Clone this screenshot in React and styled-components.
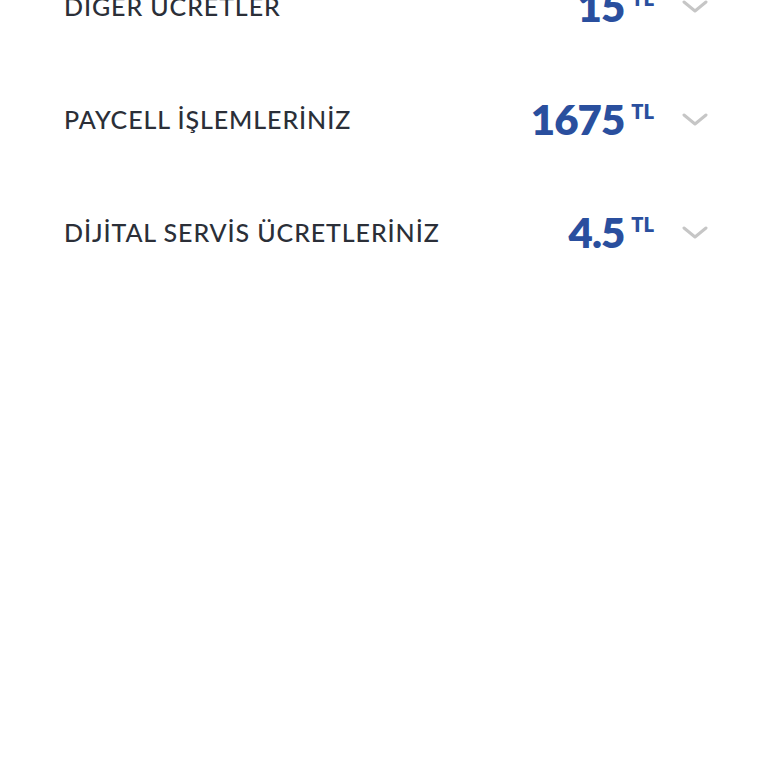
import React from 'react';
import styled, { createGlobalStyle } from 'styled-components';

const GlobalStyle = createGlobalStyle`
  html, body {
    margin: 0;
    padding: 0;
    background: #ffffff;
    overflow: hidden;
  }
  body {
    font-family: 'Lato', 'Noto Sans', sans-serif;
  }
`;

const Page = styled.div`
  width: 768px;
  height: 768px;
  overflow: hidden;
  background: #fff;
`;

// list is scrolled: first row is partly above the top edge
const List = styled.div`
  display: flex;
  flex-direction: column;
  margin-top: -51px;
  padding: 0 60px 0 64px;
`;

const Row = styled.div`
  display: flex;
  align-items: center;
  justify-content: space-between;
  height: 113px;
`;

const Label = styled.span`
  font-size: 25px;
  font-weight: 500;
  color: #2b2f38;
  letter-spacing: 0.9px;
`;

const Right = styled.div`
  display: flex;
  align-items: center;
`;

const Amount = styled.div`
  display: flex;
  align-items: flex-start;
  color: #2a4f9e;
  font-weight: 800;
`;

const Value = styled.span`
  font-size: 42px;
  line-height: 1;
  letter-spacing: -1px;
`;

const Currency = styled.span`
  font-size: 20px;
  line-height: 1;
  margin-left: 7px;
  margin-top: 3px;
`;

const Chevron = styled.svg`
  width: 26px;
  height: 16px;
  margin-left: 28px;
  margin-top: 2px;
`;

const items = [
  { label: 'DİĞER ÜCRETLER', value: '15' },
  { label: 'PAYCELL İŞLEMLERİNİZ', value: '1675' },
  { label: 'DİJİTAL SERVİS ÜCRETLERİNİZ', value: '4.5' },
];

const App = () => (
  <Page>
    <GlobalStyle />
    <List>
      {items.map((item) => (
        <Row key={item.label}>
          <Label>{item.label}</Label>
          <Right>
            <Amount>
              <Value>{item.value}</Value>
              <Currency>TL</Currency>
            </Amount>
            <Chevron viewBox="0 0 26 16">
              <path d="M2 3 L13 12 L24 3" fill="none" stroke="#c6c6c6" strokeWidth="3" strokeLinecap="round" strokeLinejoin="round" />
            </Chevron>
          </Right>
        </Row>
      ))}
    </List>
  </Page>
);

export default App;
